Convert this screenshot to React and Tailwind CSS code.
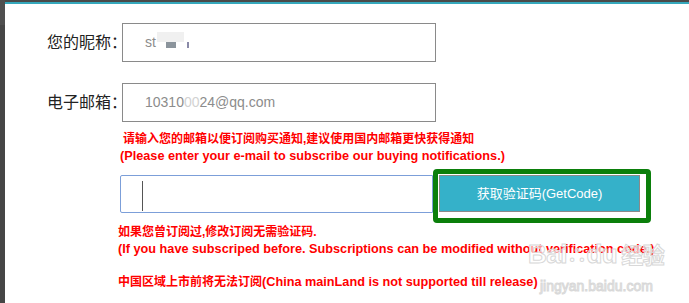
const cjk = 'font-["Liberation_Sans","Noto_Sans_CJK_SC",sans-serif]';

function En({ children }) {
  return <span className="text-[12.7px]">{children}</span>;
}

function Field({ label, children }) {
  return (
    <div className="flex items-center">
      <div className={`w-[117px] pr-[3px] text-right text-[16px] text-[#222] whitespace-nowrap ${cjk}`}>
        {label}
        <span className="inline-block w-[8px] overflow-visible">：</span>
      </div>
      <div className="w-[314px] h-[39px] border border-[#8a8a8a] bg-white flex items-center pl-[22px] text-[14px] text-[#8c8c8c] font-['Liberation_Sans',sans-serif]">
        {children}
      </div>
    </div>
  );
}

export default function App() {
  return (
    <div className="relative w-[689px] h-[303px] overflow-hidden bg-white flex">
      <div className="w-[5px] shrink-0 flex flex-col">
        <div className="h-[25px] bg-[#4f4f4f]" />
        <div className="flex-1 bg-[#464646]" />
      </div>
      <div className="flex-1 flex flex-col">
        <div className="h-[2px] bg-[#4a4a4a]" />
        <div className="h-[2px] bg-[#35a8bc]" />

        <div className="mt-[19px]">
          <Field label="您的昵称">
            <span>st</span>
            <span className="relative ml-[1px] inline-block w-[30px] h-[16px]">
              <span className="absolute left-0 top-[-3px] w-[27px] h-[10px] bg-[#f0f0f0]" />
              <span className="absolute left-[9px] top-[7px] w-[10px] h-[6px] bg-[#8b949c]" />
              <span className="absolute left-[30px] top-[7px] w-[2px] h-[6px] bg-[#8a8aa8]" />
            </span>
          </Field>
        </div>

        <div className="mt-[21px]">
          <Field label="电子邮箱">
            <span>
              10310<span className="text-[#d2d2d2]">00</span>24@qq.com
            </span>
          </Field>
        </div>

        <div className={`mt-[9px] ml-[115px] text-[12px] leading-[17px] font-bold text-[#ff0000] ${cjk}`}>
          <div className="pl-[3px]">请输入您的邮箱以便订阅购买通知,建议使用国内邮箱更快获得通知</div>
          <div><En>(Please enter your e-mail to subscribe our buying notifications.)</En></div>
        </div>

        <div className="mt-[4px] ml-[115px] flex items-start">
          <div className="relative mt-[6px] w-[313px] h-[38px] border border-[#7c9fd9] rounded-l-[2px] bg-white">
            <div className="absolute left-[21px] top-[5px] w-px h-[30px] bg-[#555]" />
          </div>
          <div className="w-[218px] h-[54px] border-[5px] border-[#0b7f0b] rounded-[4px] bg-white">
            <div className={`mt-[1px] ml-[1px] w-[201px] h-[37px] border border-[#8a8a8a] bg-[#35b1c9] flex items-center justify-center text-white text-[13px] ${cjk}`}>
              获取验证码(GetCode)
            </div>
          </div>
        </div>

        <div className={`mt-[1px] ml-[113px] text-[12px] leading-[17px] font-bold text-[#ff0000] whitespace-nowrap ${cjk}`}>
          <div>如果您曾订阅过,修改订阅无需验证码.</div>
          <div><En>(If you have subscriped before. Subscriptions can be modified without verification code.)</En></div>
          <div className="mt-[16px]">中国区域上市前将无法订阅<En>(China mainLand is not supported till release)</En></div>
        </div>
      </div>

      <div className="absolute left-[528px] top-[238px] whitespace-nowrap text-white/60 [-webkit-text-stroke:1px_#d8d8d8] font-bold">
        <div className={`text-[26px] leading-[32px] tracking-[-0.5px] ${cjk}`}>
          Bai<span className="text-[20px]">∴</span>du<span className="ml-[4px] text-[22px]">经验</span>
        </div>
        <div className="mt-[6px] ml-[12px] text-[14px] leading-[16px] font-normal font-['Liberation_Sans',sans-serif]">jingyan.baidu.com</div>
      </div>
    </div>
  );
}
